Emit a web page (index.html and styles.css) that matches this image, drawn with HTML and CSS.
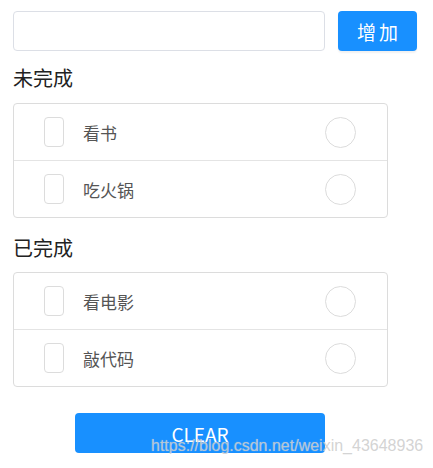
FILE: index.html
```html
<!DOCTYPE html>
<html lang="zh">
<head>
<meta charset="utf-8">
<link rel="stylesheet" href="styles.css">
</head>
<body>
<div class="app">
  <div class="form">
    <input class="input" type="text">
    <button class="btn-add">增加</button>
  </div>
  <h3 class="title first">未完成</h3>
  <ul class="card">
    <li class="row"><span class="check"></span><span class="label">看书</span><span class="circle"></span></li>
    <li class="row"><span class="check"></span><span class="label">吃火锅</span><span class="circle"></span></li>
  </ul>
  <h3 class="title">已完成</h3>
  <ul class="card">
    <li class="row"><span class="check"></span><span class="label">看电影</span><span class="circle"></span></li>
    <li class="row"><span class="check"></span><span class="label">敲代码</span><span class="circle"></span></li>
  </ul>
  <div class="footer">
    <button class="btn-clear">CLEAR</button>
  </div>
</div>
<div class="watermark">https://blog.csdn.net/weixin_43648936</div>
</body>
</html>
```
FILE: styles.css
```css
* { box-sizing: border-box; }
html, body { margin: 0; padding: 0; background: #fff; }
body {
  font-family: "Noto Sans CJK SC", "Noto Sans", sans-serif;
  color: #333;
  position: relative;
  height: 468px;
  overflow: hidden;
}
.app { padding: 11px 0 0 13px; }
.form { display: flex; gap: 13px; }
.input {
  width: 312px; height: 40px;
  border: 1px solid #dcdfe6; border-radius: 4px;
  outline: none; margin: 0; padding: 0 10px;
}
.btn-add {
  width: 79px; height: 40px; margin: 0;
  border: none; border-radius: 4px;
  background: #1890ff; color: #fff;
  font-family: inherit; font-size: 19px; letter-spacing: 3px; text-indent: 3px;
  box-shadow: 0 2px 2px rgba(0,0,0,0.06);
  padding: 0;
}
.title {
  margin: 18px 0 12px; font-weight: normal; font-size: 20px; line-height: 24px; color: #222;
}
.title.first { margin-top: 15px; margin-bottom: 13px; }
.card {
  list-style: none; margin: 0; padding: 0;
  width: 375px; border: 1px solid #dcdcdc; border-radius: 4px;
}
.row {
  display: flex; align-items: center;
  height: 56px; padding: 0 31px 0 30px;
}
.row + .row { border-top: 1px solid #e4e4e4; height: 57px; }
.check {
  width: 20px; height: 30px; border: 1px solid #dcdcdc; border-radius: 4px; flex: none;
}
.label { margin-left: 19px; flex: 1; font-size: 17px; color: #555; }
.circle {
  width: 31px; height: 31px; border: 1px solid #dcdcdc; border-radius: 50%; flex: none;
}
.footer { padding: 26px 0 0 62px; }
.btn-clear {
  width: 250px; height: 40px; margin: 0; padding: 0;
  border: none; border-radius: 4px;
  background: #1890ff; color: #fff;
  font-family: inherit; font-size: 19px;
}
.watermark {
  position: absolute; left: 151px; top: 437px;
  font-family: "Liberation Sans", Arial, sans-serif; font-size: 16px;
  color: rgba(200,200,200,0.8);
  text-shadow: 0 0 1px rgba(255,255,255,0.5);
}
```
